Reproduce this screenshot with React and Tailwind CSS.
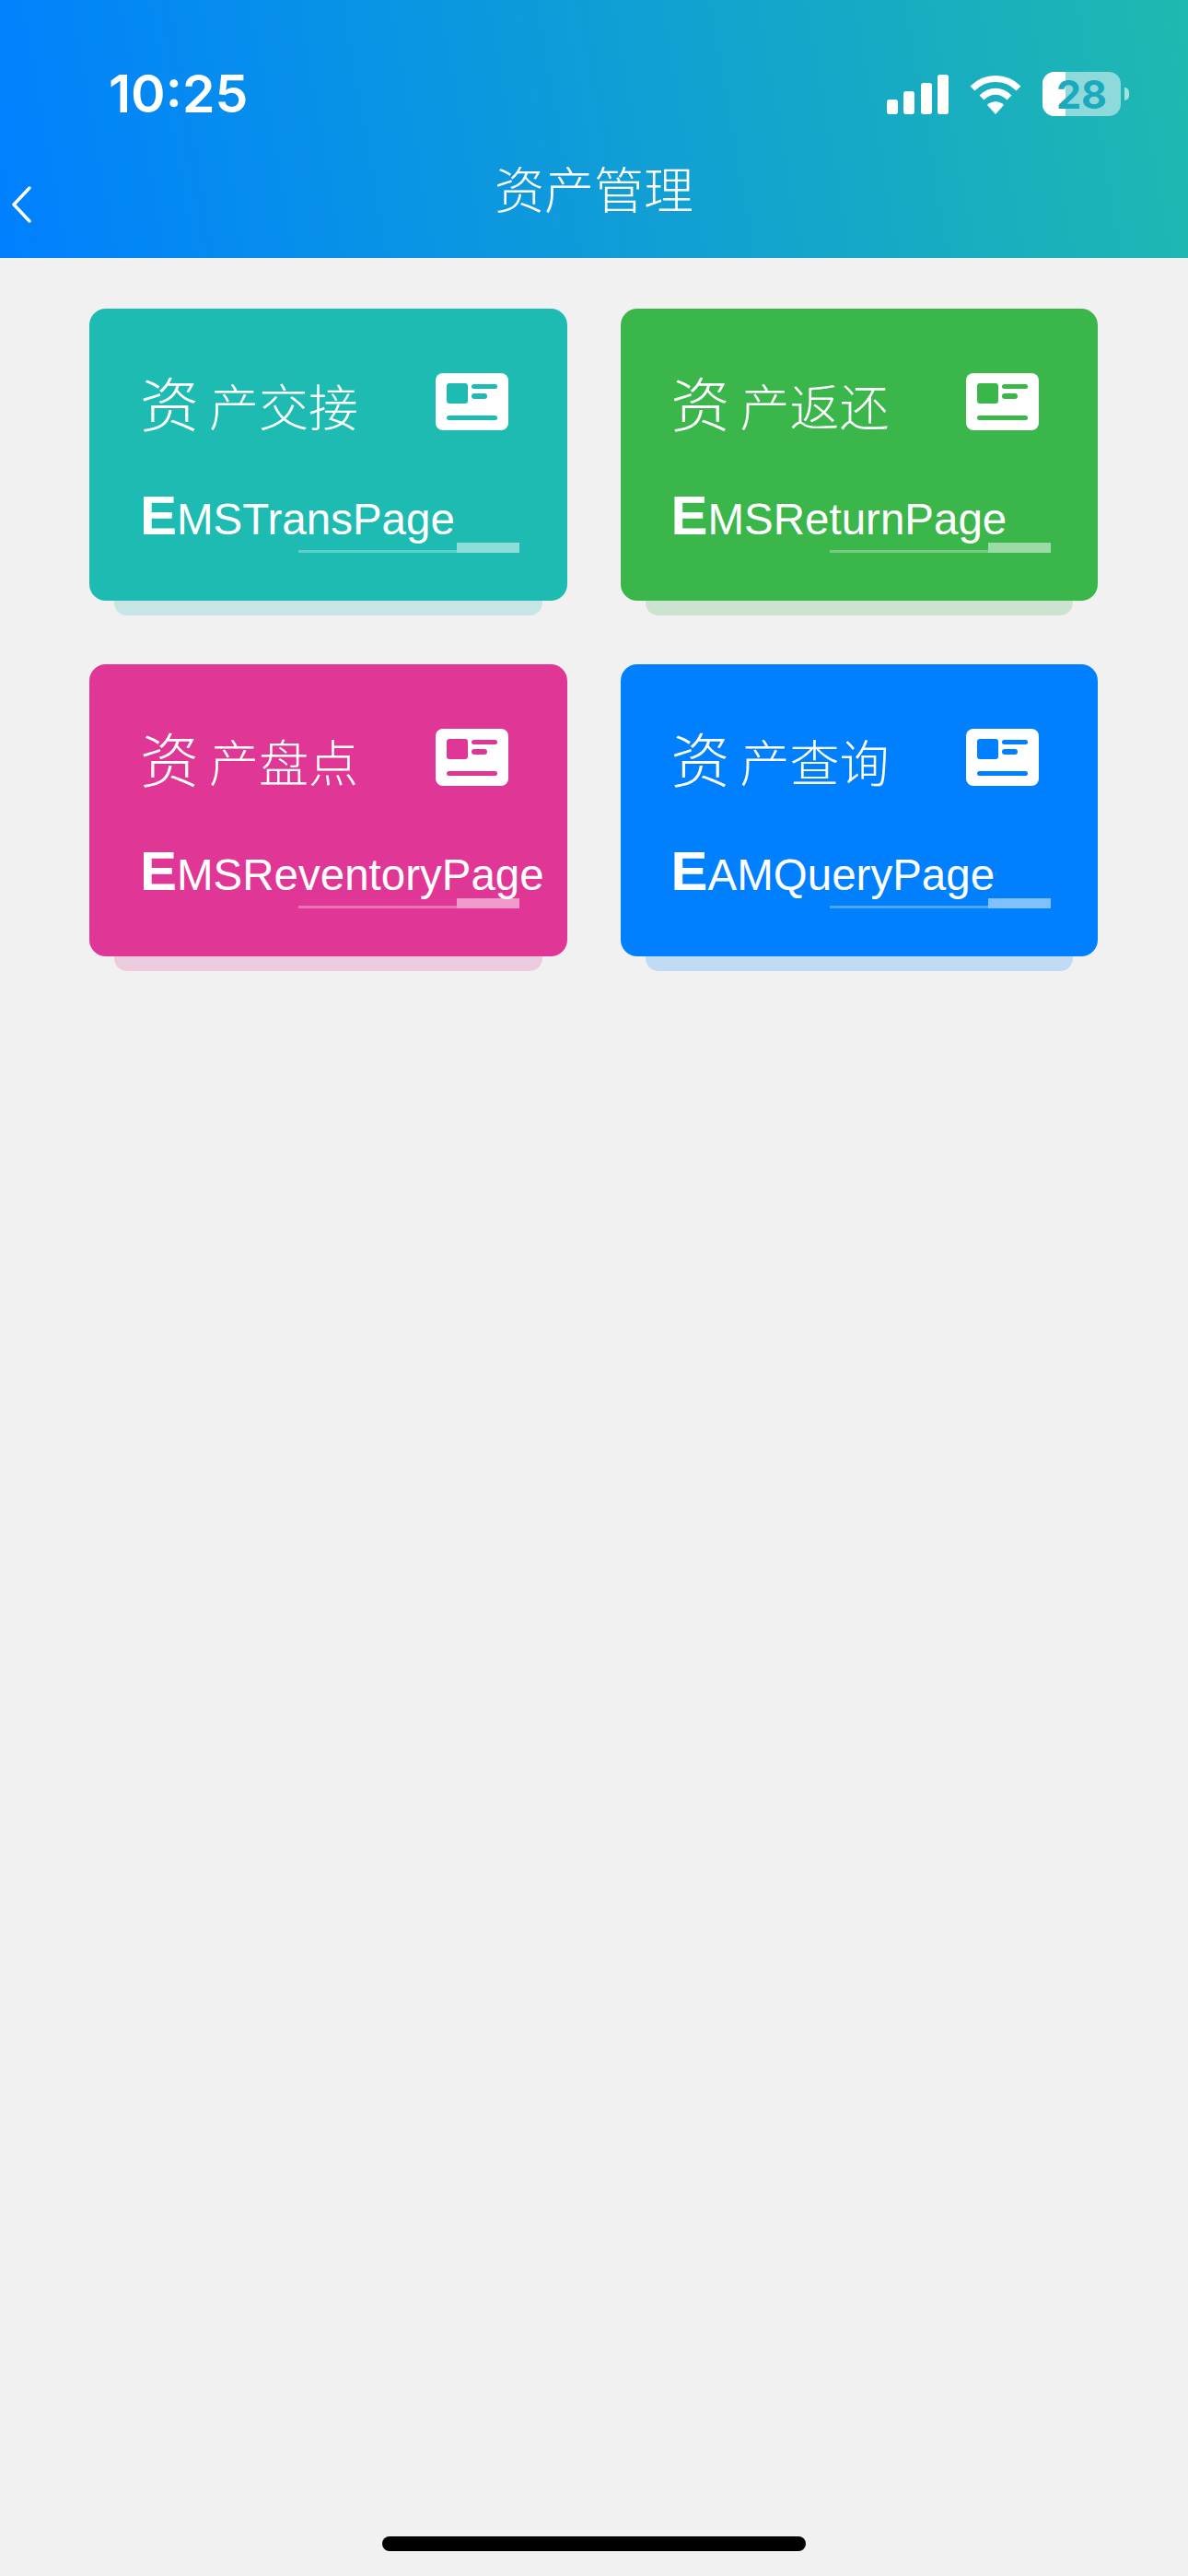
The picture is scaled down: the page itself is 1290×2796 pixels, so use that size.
const cards = [
  { title: '产交接', code: 'MSTransPage', bg: 'bg-[#1ebbb2]', under: 'bg-[#1ebbb2]/20', text: 'text-[#1ebbb2]' },
  { title: '产返还', code: 'MSReturnPage', bg: 'bg-[#3bb64b]', under: 'bg-[#3bb64b]/20', text: 'text-[#3bb64b]' },
  { title: '产盘点', code: 'MSReventoryPage', bg: 'bg-[#e03797]', under: 'bg-[#e03797]/20', text: 'text-[#e03797]' },
  { title: '产查询', code: 'AMQueryPage', bg: 'bg-[#0080ff]', under: 'bg-[#0080ff]/20', text: 'text-[#0080ff]' },
];

function CardIcon({ className }) {
  return (
    <svg width="79" height="62" viewBox="0 0 79 62" className={className}>
      <rect width="79" height="62" rx="8" fill="#fff" />
      <rect x="12" y="11" width="23" height="22" rx="3" fill="currentColor" />
      <rect x="39" y="12" width="28" height="5" rx="2.5" fill="currentColor" />
      <rect x="39" y="22" width="17" height="6" rx="3" fill="currentColor" />
      <rect x="12" y="46" width="55" height="5" rx="2.5" fill="currentColor" />
    </svg>
  );
}

function StatusIcons() {
  return (
    <div className="flex items-center">
      <svg width="67" height="43" viewBox="0 0 67 43" fill="#fff">
        <rect x="0" y="27" width="12" height="16" rx="3" />
        <rect x="18" y="18" width="12" height="25" rx="3" />
        <rect x="37" y="9" width="12" height="34" rx="3" />
        <rect x="55" y="0" width="12" height="43" rx="3" />
      </svg>
      <svg width="58" height="43" viewBox="0 0 58 43" fill="none" stroke="#fff" strokeWidth="7" className="ml-[22px]">
        <path d="M4 15 C18 1 40 1 54 15" />
        <path d="M14 25 C23 16 35 16 44 25" />
        <path d="M20 33 C25 28 33 28 38 33 L29 43 Z" fill="#fff" stroke="none" />
      </svg>
      <div className="relative ml-[22px] flex h-[48px] w-[85px] items-center justify-center rounded-[13px] bg-white/50">
        <div className="absolute inset-y-0 left-0 w-[25px] rounded-l-[13px] bg-white" />
        <span className="relative font-['Inter',sans-serif] text-[43px] font-bold leading-none text-[#1aa9bd]">28</span>
      </div>
      <div className="ml-[4px] h-[14px] w-[5px] rounded-r-full bg-white/60" />
    </div>
  );
}

function Card({ card }) {
  return (
    <div className={`relative h-[317px] rounded-[18px] pl-[55px] pr-[64px] pt-[68px] text-white ${card.bg}`}>
      <div className="flex items-start justify-between">
        <div className="flex items-baseline font-['Noto_Sans_CJK_SC',sans-serif] font-light leading-none">
          <span className="text-[64px]">资</span>
          <span className="ml-[11px] text-[54px]">{card.title}</span>
        </div>
        <CardIcon className={`mt-[2px] ${card.text}`} />
      </div>
      <div className="mt-[63px] flex items-baseline whitespace-nowrap font-['Liberation_Sans',sans-serif] leading-none">
        <span className="text-[60px] font-bold">E</span>
        <span className="text-[47.5px]">{card.code}</span>
      </div>
      {/* underline accent */}
      <div className="absolute bottom-[52px] left-[227px] h-[3px] w-[172px] bg-white/30" />
      <div className="absolute bottom-[52px] left-[399px] h-[11px] w-[68px] bg-white/50" />
      <div className={`absolute left-[27px] right-[27px] top-full h-[16px] rounded-b-[14px] ${card.under}`} />
    </div>
  );
}

export default function App() {
  return (
    <div className="flex min-h-[2796px] flex-col bg-[#f1f1f1]">
      <header className="h-[280px] bg-[linear-gradient(80deg,#0080ff,#1fb9b0)] text-white">
        <div className="flex items-center justify-between pl-[118px] pr-[64px] pt-[78px]">
          <span className="font-['Inter',sans-serif] text-[57px] font-semibold leading-[48px]">10:25</span>
          <StatusIcons />
        </div>
        <div className="mt-[50px] grid grid-cols-[1fr_auto_1fr] items-start">
          <svg width="26" height="40" viewBox="0 0 26 40" fill="none" stroke="#fff" strokeWidth="3.5" strokeLinecap="round" strokeLinejoin="round" className="ml-[10px] mt-[26px]">
            <path d="M22 2 L5 20 L22 38" />
          </svg>
          <h1 className="font-['Noto_Sans_CJK_SC',sans-serif] text-[54px] font-light leading-[56px]">资产管理</h1>
        </div>
      </header>
      <main className="grid grid-cols-2 gap-x-[58px] gap-y-[69px] pl-[97px] pr-[98px] pt-[55px]">
        {cards.map((card) => (
          <Card key={card.code} card={card} />
        ))}
      </main>
      <div className="mt-auto flex justify-center pb-[27px]">
        <div className="h-[16px] w-[460px] rounded-full bg-black" />
      </div>
    </div>
  );
}
